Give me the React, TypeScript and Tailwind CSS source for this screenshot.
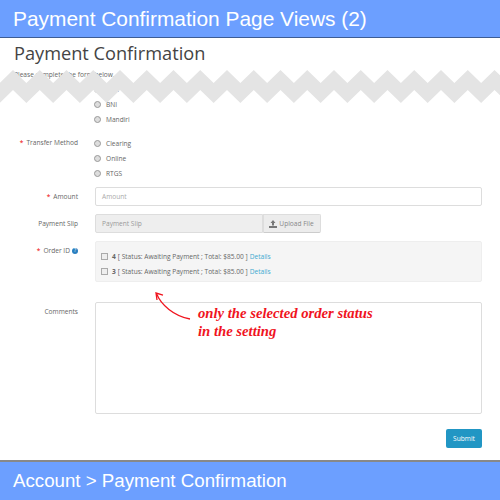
const sans = "font-['Open_Sans',sans-serif]"

function Label({ text, required }: { text: string; required?: boolean }) {
  return (
    <div className="w-[78px] shrink-0 pt-[1px] text-right text-[6.6px] leading-[12px] text-[#666]">
      {required && <span className="mr-[3px] text-[#e00]">*</span>}
      {text}
    </div>
  )
}

function Radio({ text }: { text: string }) {
  return (
    <div className="-ml-[1px] flex h-[15px] items-center gap-[5px] text-[6.6px] text-[#666]">
      <span className="h-[7px] w-[7px] rounded-full border border-[#999] bg-[#ddd]"></span>
      {text}
    </div>
  )
}

function OrderLine({ id }: { id: number }) {
  return (
    <div className="flex h-[15px] items-center text-[6.6px] text-[#666]">
      <span className="mr-[4px] h-[7px] w-[7px] border border-[#aaa] bg-[#eee]"></span>
      <b className="mr-[2px]">{id}</b>[ Status: Awaiting Payment ; Total: $85.00 ]
      <span className="ml-[2px] text-[#3fa9d0]">Details</span>
    </div>
  )
}

function zigzag() {
  const step = 13.375
  const top: string[] = []
  const bottom: string[] = []
  for (let i = 0; i <= 40; i++) {
    const x = 13 - 26.75 + i * step
    top.push(`${x},${i % 2 === 0 ? 0 : 13}`)
    bottom.unshift(`${x},${i % 2 === 0 ? 20 : 33}`)
  }
  return [...top, ...bottom].join(' ')
}

export default function App() {
  return (
    <div className={`relative flex h-[500px] w-[500px] flex-col overflow-hidden bg-white ${sans}`}>
      <div className="flex h-[38px] shrink-0 items-center border-b border-[#3d5c94] bg-[#6c9fff] pl-[13px] font-['Liberation_Sans',sans-serif] text-[20.900px] text-white">
        Payment Confirmation Page Views (2)
      </div>

      <div className="flex-1 pr-[18px] pl-[14px]">
        <h1 className="mt-[2px] text-[18.2px] leading-[27px] text-[#444]">Payment Confirmation</h1>
        <p className="mt-[2px] text-[6.6px] leading-[12px] text-[#666]">Please complete the form below.</p>

        <div className="-ml-[14px] flex">
          <Label text="Transfer To" required />
          <div className="ml-[17px] pt-[1px]">
            <Radio text="BCA" />
            <Radio text="BNI" />
            <Radio text="Mandiri" />
          </div>
        </div>

        <div className="mt-[9px] -ml-[14px] flex">
          <Label text="Transfer Method" required />
          <div className="ml-[17px]">
            <Radio text="Clearing" />
            <Radio text="Online" />
            <Radio text="RTGS" />
          </div>
        </div>

        <div className="mt-[6px] -ml-[14px] flex items-center">
          <Label text="Amount" required />
          <div className="ml-[17px] flex h-[19px] flex-1 items-center rounded-[2px] border border-[#ddd] pl-[6px] text-[6.6px] text-[#aaa]">
            Amount
          </div>
        </div>

        <div className="mt-[8px] -ml-[14px] flex items-center">
          <Label text="Payment Slip" />
          <div className="ml-[17px] flex h-[19px] w-[168px] items-center rounded-l-[2px] border border-[#ddd] bg-[#eee] pl-[6px] text-[6.6px] text-[#999]">
            Payment Slip
          </div>
          <div className="flex h-[19px] w-[58px] items-center justify-center gap-[2px] rounded-r-[2px] border border-[#ddd] border-b-[#ccc] bg-[#ececec] pr-[1px] text-[6.6px] text-[#888]">
            <svg width="8" height="8" viewBox="0 0 8 8" fill="#777">
              <path d="M4 0 6.500 3H5v2.500H3V3H1.500Z" />
              <path d="M0 6h8v2H0Z" />
            </svg>
            Upload File
          </div>
        </div>

        <div className="mt-[8px] -ml-[14px] flex">
          <div className="flex w-[78px] shrink-0 justify-end pt-[4px]">
            <div className="text-right text-[6.6px] leading-[12px] text-[#666]">
              <span className="mr-[3px] text-[#e00]">*</span>
              Order ID
            </div>
            <span className="mt-[3px] ml-[2px] flex h-[6px] w-[6px] items-center justify-center rounded-full bg-[#2a7fc0] text-[5px] text-white">?</span>
          </div>
          <div className="ml-[17px] h-[41px] flex-1 rounded-[2px] border border-[#eee] bg-[#f5f5f5] pt-[7px] pl-[5px]">
            <OrderLine id={4} />
            <OrderLine id={3} />
          </div>
        </div>

        <div className="mt-[20px] -ml-[14px] flex">
          <div className="pt-[3px]">
            <Label text="Comments" />
          </div>
          <div className="ml-[17px] h-[112px] flex-1 rounded-[2px] border border-[#ddd]"></div>
        </div>

        <div className="mt-[15px] flex justify-end">
          <div className="flex h-[19px] w-[36px] items-center justify-center rounded-[2px] bg-[#2196c4] text-[6.6px] text-white">
            Submit
          </div>
        </div>
      </div>

      <div className="flex h-[40px] shrink-0 items-center border-t-2 border-[#888] bg-[#6c9fff] pl-[13px] font-['Liberation_Sans',sans-serif] text-[18.700px] text-white">
        Account &gt; Payment Confirmation
      </div>

      {/* torn-page strip over the form */}
      <svg className="absolute top-[70px] left-0" width="500" height="34" viewBox="0 0 500 34">
        <polygon points={zigzag()} fill="#e4e4e4" />
      </svg>

      {/* red note over the form */}
      <svg className="absolute top-[290px] left-[150px]" width="50" height="32" viewBox="0 0 50 32" fill="none" stroke="#f0141e" strokeWidth="1.3">
        <path d="M6.500 3.500C11 15 24 26 40 29" />
        <path d="M7 10 6 3 13 5" />
      </svg>
      <div className="absolute top-[304px] left-[198px] font-['Liberation_Serif',serif] text-[14.700px] leading-[18px] font-bold text-[#f0141e] italic">
        only the selected order status
        <br />
        in the setting
      </div>
    </div>
  )
}
